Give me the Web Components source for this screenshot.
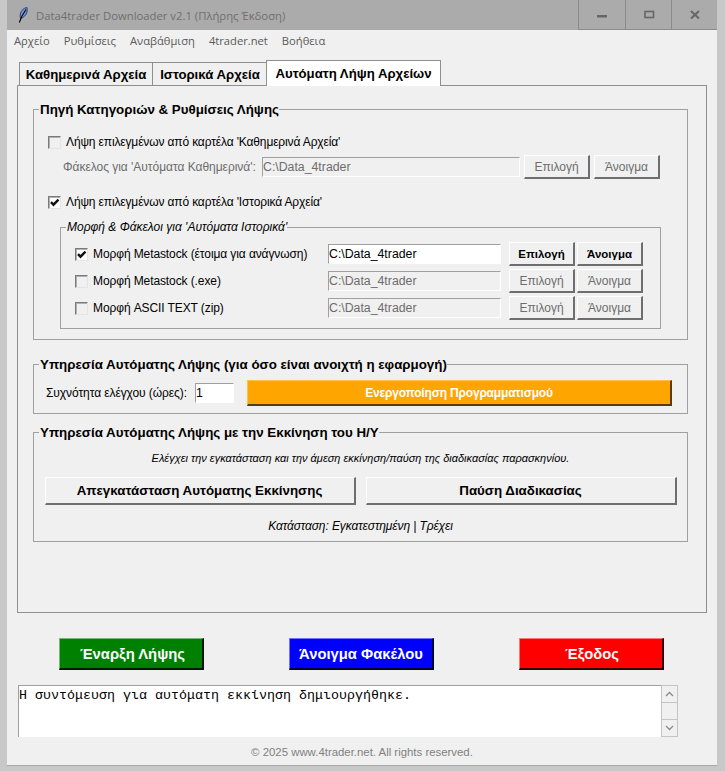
<!DOCTYPE html>
<html lang="el">
<head>
<meta charset="utf-8">
<title>Data4trader Downloader</title>
<style>
  html, body { margin: 0; height: 771px; overflow: hidden; }
  body { background: #c8c8c8; font-family: "Liberation Sans", Arial, sans-serif; color: #000; }
</style>
</head>
<body>
<app-window>
  <title-bar>Data4trader Downloader v2.1 (Πλήρης Έκδοση)</title-bar>
  <menu-bar>
    <span>Αρχείο</span><span>Ρυθμίσεις</span><span>Αναβάθμιση</span><span>4trader.net</span><span>Βοήθεια</span>
  </menu-bar>
  <tab-strip></tab-strip>
  <auto-tab></auto-tab>
  <action-bar></action-bar>
  <log-box>Η συντόμευση για αυτόματη εκκίνηση δημιουργήθηκε.</log-box>
  <app-footer>© 2025 www.4trader.net. All rights reserved.</app-footer>
</app-window>

<script>
function shadow(el, html) {
  el.attachShadow({ mode: 'open' });
  el.shadowRoot.innerHTML = html;
}

class AppWindow extends HTMLElement {
  connectedCallback() {
    shadow(this, `
      <style>
        :host { display: flex; flex-direction: column; width: 710px; height: 765px; margin-left: 7px; background: #f0f0f0; box-shadow: 0 1px 0 #a8a8a8; box-sizing: border-box; }
      </style>
      <slot></slot>`);
  }
}

class TitleBar extends HTMLElement {
  connectedCallback() {
    shadow(this, `
      <style>
        :host { display: flex; align-items: center; height: 30px; background: #ababab; color: #6f6f6f; font: 11.300px "Open Sans", sans-serif; flex: none; }
        .feather { margin-left: 11px; margin-right: 8px; flex: none; }
        .text { flex: 1; }
        .ctl { display: flex; height: 30px; border-bottom: 1px solid #8b8b8b; box-sizing: border-box; }
        .ctl div { box-sizing: border-box; width: 46px; border-left: 1px solid #8b8b8b; display: flex; align-items: center; justify-content: center; }
        .ctl div:first-child { width: 47px; }
      </style>
      <svg class="feather" width="10" height="16" viewBox="0 0 10 16">
        <path d="M9 .5C5.500 1 3 3.500 2.300 7c-.3 1.800-.2 3.300.3 4.500C5.800 10.500 8.300 8 9 5c.3-1.800.3-3.200 0-4.500z" fill="#6f93d6" stroke="#1c2c55" stroke-width=".8"/>
        <path d="M8 2.500C5.800 5.500 3.300 9.500 1.300 15.500" fill="none" stroke="#000" stroke-width="1.100"/>
      </svg>
      <div class="text"><slot></slot></div>
      <div class="ctl">
        <div><svg width="12" height="12" viewBox="0 0 12 12"><rect x="1" y="6" width="10" height="2.500" fill="#666"/></svg></div>
        <div><svg width="12" height="12" viewBox="0 0 12 12"><rect x="2" y="2.500" width="8.500" height="6" fill="none" stroke="#666" stroke-width="1.600"/></svg></div>
        <div><svg width="12" height="12" viewBox="0 0 12 12"><path d="M2 2l8 7.500M10 2l-8 7.500" fill="none" stroke="#666" stroke-width="2"/></svg></div>
      </div>`);
  }
}

class MenuBar extends HTMLElement {
  connectedCallback() {
    shadow(this, `
      <style>
        :host { display: flex; align-items: center; gap: 14px; height: 21px; padding-left: 7px; color: #5a5a5a; font: 11.200px "Open Sans", sans-serif; flex: none; }
      </style>
      <slot></slot>`);
  }
}

class TabStrip extends HTMLElement {
  connectedCallback() {
    shadow(this, `
      <style>
        :host { display: flex; align-items: flex-end; height: 35px; padding-left: 12px; margin-bottom: -1px; position: relative; z-index: 1; flex: none; box-sizing: border-box; font: bold 13.200px "Liberation Sans", sans-serif; }
        div { box-sizing: border-box; height: 24px; line-height: 23px; text-align: center; border: 1px solid #8f8f8f; border-bottom: 1px solid #8f8f8f; border-right: 0; background: #f0f0f0; }
        .a { width: 133px; }
        .b { width: 115px; }
        .on { width: 175px; height: 26px; line-height: 25px; background: #fff; border-right: 1px solid #8f8f8f; border-bottom: 0; margin-left: -1px; }
      </style>
      <div class="a">Καθημερινά Αρχεία</div>
      <div class="b">Ιστορικά Αρχεία</div>
      <div class="on">Αυτόματη Λήψη Αρχείων</div>`);
  }
}

class TkGroup extends HTMLElement {
  connectedCallback() {
    const minor = this.hasAttribute('minor');
    shadow(this, `
      <style>
        :host { display: block; }
        fieldset { margin: 0; padding: 0; border: 1px solid #a0a0a0; min-width: 0; }
        legend { padding: 0 0 0 1px; margin-left: 5px; text-align: left; letter-spacing: 0; font: ${minor ? 'italic 12px' : 'bold 13.330px'} "Liberation Sans", sans-serif; color: #000; }
        .body { padding: var(--pad, 0); }
      </style>
      <fieldset>
        <legend>${this.getAttribute('label')}</legend>
        <div class="body"><slot></slot></div>
      </fieldset>`);
  }
}

class TkButton extends HTMLElement {
  connectedCallback() {
    shadow(this, `
      <style>
        :host { display: block; flex: none; }
        button { display: block; width: 100%; height: 100%; padding: var(--btn-pad, 0); margin: 0; box-sizing: border-box; font: inherit; color: inherit; letter-spacing: inherit; background: var(--bg, #f0f0f0);
          border-style: solid; border-width: 1px 2px 2px 1px;
          border-color: var(--hi, #fff) var(--lo, #6e6e6e) var(--lo, #6e6e6e) var(--hi, #fff); }
      </style>
      <button type="button"><slot></slot></button>`);
  }
}

class TkCheck extends HTMLElement {
  connectedCallback() {
    const on = this.hasAttribute('checked');
    shadow(this, `
      <style>
        :host { display: block; flex: none; width: 13px; height: 13px; }
        div { box-sizing: border-box; width: 13px; height: 13px; border: 1px solid; border-color: #7a7a7a #e4e4e4 #e4e4e4 #7a7a7a; background: ${on ? '#fff' : '#f0f0f0'}; box-shadow: inset 1px 1px 0 #b0b0b0; }
        svg { display: block; }
      </style>
      <div>${on ? '<svg width="11" height="11" viewBox="0 0 11 11"><path d="M2 5.200l2.500 2.500 5-5" fill="none" stroke="#111" stroke-width="2.400"/></svg>' : ''}</div>`);
  }
}

class TkEntry extends HTMLElement {
  connectedCallback() {
    const off = this.hasAttribute('disabled');
    shadow(this, `
      <style>
        :host { display: block; flex: none; box-sizing: border-box; height: 20px; line-height: 18px; padding-left: 0; font-size: 12.300px; letter-spacing: 0; overflow: hidden;
          border: 1px solid; border-color: #a0a0a0 #fff #fff #a0a0a0; background: ${off ? '#f0f0f0' : '#fff'}; color: ${off ? '#6d6d6d' : '#000'}; }
      </style>
      <slot></slot>`);
  }
}

class PathRow extends HTMLElement {
  connectedCallback() {
    const on = this.hasAttribute('checked');
    shadow(this, `
      <style>
        :host { display: flex; align-items: center; height: 24px; font-size: 12px; }
        span { width: 235px; margin-left: 5px; letter-spacing: -.1px; }
        tk-entry { width: 173px; }
        tk-button { width: 66px; height: 24px; color: ${on ? '#000' : '#6d6d6d'}; font-weight: ${on ? 'bold' : 'normal'}; font-size: ${on ? '11.500px' : '12px'}; }
        .pick { margin-left: 8px; margin-right: 2px; }
      </style>
      <tk-check ${on ? 'checked' : ''}></tk-check>
      <span>${this.getAttribute('label')}</span>
      <tk-entry ${on ? '' : 'disabled'}>C:\\Data_4trader</tk-entry>
      <tk-button class="pick">Επιλογή</tk-button>
      <tk-button>Άνοιγμα</tk-button>`);
  }
}

class AutoTab extends HTMLElement {
  connectedCallback() {
    shadow(this, `
      <style>
        :host { display: block; box-sizing: border-box; width: 690px; height: 528px; margin-left: 10px; padding: 16px 18px 0 15px; border: 1px solid #8f8f8f; font-size: 12px; flex: none; }
        .row { display: flex; align-items: center; }
        .src { --pad: 15px 0 10px 14px; }
        .chk { height: 20px; gap: 5px; font-size: 12px; letter-spacing: -.14px; }
        .folder { height: 24px; margin-top: 3px; padding-left: 15px; color: #6d6d6d; font-size: 12px; }
        .folder span { width: 199px; letter-spacing: -.03px; }
        .folder tk-entry { width: 258px; }
        .folder tk-button { width: 66px; height: 24px; font-size: 12px; margin-left: 4px; }
        .hist { margin-top: 13px; }
        .inner { margin: 8px 26px 0 12px; --pad: 8px 0 8px 14px; }
        path-row + path-row { margin-top: 3px; }
        .svc { margin-top: 17px; --pad: 8px 0 7px 12px; font-size: 12px; }
        .svc span { width: 149px; letter-spacing: -.08px; }
        .svc tk-entry { width: 39px; }
        .go { width: 425px; height: 26px; margin-left: 13px; color: #fff; font-weight: bold; font-size: 12px; letter-spacing: -.18px; --bg: #ffa500; --hi: #ffc04d; --lo: #5c3b00; }
        .boot { margin-top: 11px; --pad: 11px 0 8px 0; text-align: center; }
        .note { height: 14px; line-height: 14px; font-size: 11px; font-style: italic; }
        .big { justify-content: center; gap: 10px; height: 28px; margin-top: 12px; }
        .big tk-button { width: 311px; height: 28px; font-weight: bold; font-size: 13.330px; }
        .status { height: 14px; line-height: 14px; margin-top: 14px; font-size: 12px; letter-spacing: -.1px; font-style: italic; }
      </style>
      <tk-group class="src" label="Πηγή Κατηγοριών &amp; Ρυθμίσεις Λήψης">
        <div class="row chk"><tk-check></tk-check><span>Λήψη επιλεγμένων από καρτέλα 'Καθημερινά Αρχεία'</span></div>
        <div class="row folder"><span>Φάκελος για 'Αυτόματα Καθημερινά':</span><tk-entry disabled>C:\\Data_4trader</tk-entry><tk-button>Επιλογή</tk-button><tk-button>Άνοιγμα</tk-button></div>
        <div class="row chk hist"><tk-check checked></tk-check><span>Λήψη επιλεγμένων από καρτέλα 'Ιστορικά Αρχεία'</span></div>
        <tk-group class="inner" minor label="Μορφή &amp; Φάκελοι για 'Αυτόματα Ιστορικά'">
          <path-row checked label="Μορφή Metastock (έτοιμα για ανάγνωση)"></path-row>
          <path-row label="Μορφή Metastock (.exe)"></path-row>
          <path-row label="Μορφή ASCII TEXT (zip)"></path-row>
        </tk-group>
      </tk-group>
      <tk-group class="svc" label="Υπηρεσία Αυτόματης Λήψης (για όσο είναι ανοιχτή η εφαρμογή)">
        <div class="row"><span>Συχνότητα ελέγχου (ώρες):</span><tk-entry>1</tk-entry><tk-button class="go">Ενεργοποίηση Προγραμματισμού</tk-button></div>
      </tk-group>
      <tk-group class="boot" label="Υπηρεσία Αυτόματης Λήψης με την Εκκίνηση του Η/Υ">
        <div class="note">Ελέγχει την εγκατάσταση και την άμεση εκκίνηση/παύση της διαδικασίας παρασκηνίου.</div>
        <div class="row big"><tk-button>Απεγκατάσταση Αυτόματης Εκκίνησης</tk-button><tk-button>Παύση Διαδικασίας</tk-button></div>
        <div class="status">Κατάσταση: Εγκατεστημένη | Τρέχει</div>
      </tk-group>`);
  }
}

class ActionBar extends HTMLElement {
  connectedCallback() {
    shadow(this, `
      <style>
        :host { display: flex; gap: 85px; padding: 25px 0 0 52px; flex: none; }
        tk-button { width: 145px; height: 32px; color: #fff; font-weight: bold; font-size: 14.800px; --hi: rgba(255,255,255,.45); --lo: rgba(0,0,0,.8); }
        .start { --bg: #008000; --btn-pad: 0 0 0 3px; }
        .open { --bg: #0000ff; }
        .quit { --bg: #ff0000; --btn-pad: 0 0 0 2px; }
      </style>
      <tk-button class="start">Έναρξη Λήψης</tk-button>
      <tk-button class="open">Άνοιγμα Φακέλου</tk-button>
      <tk-button class="quit">Έξοδος</tk-button>`);
  }
}

class LogBox extends HTMLElement {
  connectedCallback() {
    shadow(this, `
      <style>
        :host { display: flex; height: 52px; margin: 15px 0 0 11px; flex: none; }
        .text { width: 643px; box-sizing: border-box; background: #fff; border-top: 1px solid #a0a0a0; border-left: 1px solid #a0a0a0; padding: 2px 0 0 0; font: 13.330px/15px "Liberation Mono", monospace; }
        .bar { width: 17px; display: flex; flex-direction: column; box-sizing: border-box; border: 1px solid #c4c4c4; background: #f0f0f0; justify-content: space-between; }
        .arrow { height: 16px; display: flex; align-items: center; justify-content: center; }
        .up { border-bottom: 1px solid #c4c4c4; }
        .down { border-top: 1px solid #c4c4c4; }
      </style>
      <div class="text"><slot></slot></div>
      <div class="bar">
        <div class="arrow up"><svg width="9" height="6" viewBox="0 0 9 6"><path d="M1 5l3.500-3.500L8 5" fill="none" stroke="#8a8a8a" stroke-width="1.300"/></svg></div>
        <div class="arrow down"><svg width="9" height="6" viewBox="0 0 9 6"><path d="M1 1l3.500 3.500L8 1" fill="none" stroke="#8a8a8a" stroke-width="1.300"/></svg></div>
      </div>`);
  }
}

class AppFooter extends HTMLElement {
  connectedCallback() {
    shadow(this, `
      <style>
        :host { display: block; text-align: center; height: 28px; line-height: 30px; font-size: 11.400px; color: #808080; flex: none; }
      </style>
      <slot></slot>`);
  }
}

customElements.define('app-window', AppWindow);
customElements.define('title-bar', TitleBar);
customElements.define('menu-bar', MenuBar);
customElements.define('tab-strip', TabStrip);
customElements.define('tk-group', TkGroup);
customElements.define('tk-button', TkButton);
customElements.define('tk-check', TkCheck);
customElements.define('tk-entry', TkEntry);
customElements.define('path-row', PathRow);
customElements.define('auto-tab', AutoTab);
customElements.define('action-bar', ActionBar);
customElements.define('log-box', LogBox);
customElements.define('app-footer', AppFooter);
</script>
</body>
</html>
